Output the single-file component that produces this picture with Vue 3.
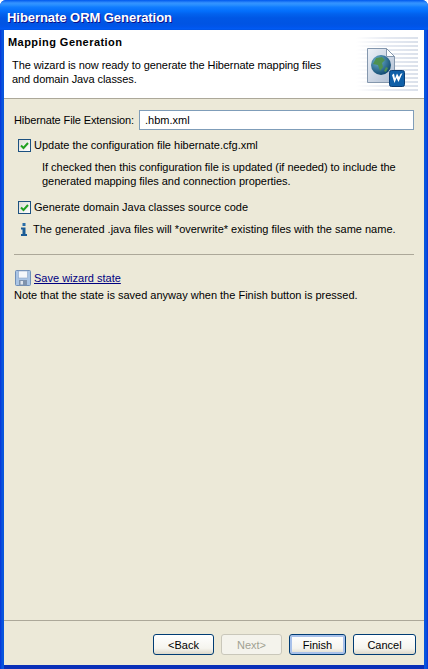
<script setup>
const buttons = [
  { label: "<Back", size: "wide" },
  { label: "Next>", size: "wide", disabled: true },
  { label: "Finish", size: "narrow", primary: true },
  { label: "Cancel", size: "wider" },
];
</script>

<template>
  <div class="window">
    <div class="titlebar">Hibernate ORM Generation</div>
    <div class="client">
      <header class="banner">
        <div class="banner-text">
          <h1>Mapping Generation</h1>
          <p>The wizard is now ready to generate the Hibernate mapping files<br />and domain Java classes.</p>
        </div>
        <div class="banner-art">
          <svg width="66" height="54" viewBox="0 0 66 54">
            <defs>
              <linearGradient id="fade" x1="0" x2="1" y1="0" y2="0">
                <stop offset="0" stop-color="#e6eaf2" stop-opacity="0" />
                <stop offset="0.5" stop-color="#e6eaf2" />
                <stop offset="1" stop-color="#dbe1eb" />
              </linearGradient>
              <linearGradient id="sheet" x1="0" x2="1" y1="0" y2="1">
                <stop offset="0" stop-color="#eef2f8" />
                <stop offset="1" stop-color="#aebdd2" />
              </linearGradient>
              <radialGradient id="globe" cx="0.35" cy="0.3" r="0.8">
                <stop offset="0" stop-color="#6fb4d0" />
                <stop offset="1" stop-color="#083f68" />
              </radialGradient>
            </defs>
            <g fill="url(#fade)">
              <rect v-for="n in 14" :key="n" x="4" :y="n * 4 - 4" width="62" height="2" />
            </g>
            <path d="M15.500 11.500h19l8 8v26h-27z" fill="url(#sheet)" stroke="#8497ad" />
            <path d="M34.500 11.500v8h8z" fill="#fff" stroke="#8497ad" />
            <circle cx="29" cy="28" r="10" fill="url(#globe)" />
            <path d="M24 21l6-1 3 3-3 3 1 4-3 4-2-6-5-1zM34 30l2 1-2 4-2-1z" fill="#4f9150" />
            <rect x="37.500" y="33.500" width="15" height="16" rx="2" fill="#0f5fa8" stroke="#0a3e76" />
            <path d="M40 38l2.500 8 2-5 2 4 4-9-2 1-1.500 3-2-3.500-2 5-1-5z" fill="#fff" />
          </svg>
        </div>
      </header>

      <main class="content">
        <div class="field-row">
          <label>Hibernate File Extension:</label>
          <div class="text-input">.hbm.xml</div>
        </div>

        <div class="check-row first">
          <span class="check">
            <svg width="9" height="9" viewBox="0 0 9 9"><path d="M1 4.500l2.500 2.500L8 2" fill="none" stroke="#21a121" stroke-width="2" /></svg>
          </span>
          <span>Update the configuration file hibernate.cfg.xml</span>
        </div>
        <p class="hint">If checked then this configuration file is updated (if needed) to include the<br />generated mapping files and connection properties.</p>

        <div class="check-row second">
          <span class="check">
            <svg width="9" height="9" viewBox="0 0 9 9"><path d="M1 4.500l2.500 2.500L8 2" fill="none" stroke="#21a121" stroke-width="2" /></svg>
          </span>
          <span>Generate domain Java classes source code</span>
        </div>
        <div class="info-row">
          <svg width="8" height="13" viewBox="0 0 8 13">
            <rect x="2.500" y="0" width="3" height="3" fill="#2a6ea8" />
            <path d="M1 4.500h4.500V11H7v2H1v-2h1.500V6.500H1z" fill="#1b5c96" />
          </svg>
          <span>The generated .java files will *overwrite* existing files with the same name.</span>
        </div>

        <hr class="rule" />

        <div class="save-row">
          <svg width="16" height="16" viewBox="0 0 16 16">
            <rect x="0.500" y="0.500" width="15" height="15" rx="1" fill="#a9c4e4" stroke="#6f8fb8" />
            <rect x="3.500" y="1" width="9" height="7" fill="#f4f7fb" stroke="#8ea6c6" stroke-width="0.600" />
            <rect x="4" y="10" width="8" height="5.500" fill="#7f93ad" />
            <rect x="5.500" y="11" width="2.500" height="3.500" fill="#dfe6ef" />
          </svg>
          <a class="link">Save wizard state</a>
        </div>
        <p class="note">Note that the state is saved anyway when the Finish button is pressed.</p>
      </main>

      <footer class="footer">
        <button
          v-for="b in buttons"
          :key="b.label"
          :class="['btn', b.size, { disabled: b.disabled, primary: b.primary }]"
        >
          {{ b.label }}
        </button>
      </footer>
    </div>
  </div>
</template>

<style scoped>
.window {
  width: 428px;
  height: 669px;
  display: flex;
  flex-direction: column;
  box-sizing: border-box;
  overflow: hidden;
  border-radius: 6px 6px 0 0;
  background: linear-gradient(90deg, #0831d9 0, #0855dd 2px, #0855dd 426px, #0831d9 100%);
  font-family: "Liberation Sans", Arial, sans-serif;
  font-size: 11px;
  line-height: 14px;
  color: #000;
}

.titlebar {
  height: 30px;
  flex: none;
  box-sizing: border-box;
  padding: 6px 0 0 7px;
  display: flex;
  align-items: center;
  color: #fff;
  font-size: 13px;
  font-weight: 700;
  letter-spacing: -0.05px;
  text-shadow: 1px 1px 0 #0f1089;
  background: linear-gradient(
    180deg,
    #0058ee 0,
    #3593ff 3px,
    #288eff 5px,
    #127dff 7px,
    #036ffc 11px,
    #0262ee 14px,
    #0057e5 18px,
    #0054e3 24px,
    #0055eb 27px,
    #005bf5 29px,
    #0050dc 30px
  );
}

.client {
  flex: 1;
  min-height: 0;
  margin: 0 4px 4px;
  display: flex;
  flex-direction: column;
  background: #ece9d8;
  box-shadow: 0 4px 0 #0a2fb8;
}

.banner {
  height: 69px;
  flex: none;
  box-sizing: border-box;
  display: flex;
  justify-content: space-between;
  background: #fff;
  border-bottom: 1px solid #aca899;
}

.banner-text {
  padding: 5px 0 0 4px;
}

.banner h1 {
  margin: 0;
  font-size: 11px;
  line-height: 14px;
  font-weight: 700;
  letter-spacing: 0.45px;
}

.banner p {
  margin: 9px 0 0 4px;
  letter-spacing: -0.08px;
}

.banner-art {
  padding: 7px 6px 0 0;
}

.banner-art svg {
  display: block;
}

.content {
  flex: 1;
  padding: 11px 10px 0;
}

.content p {
  margin: 0;
}

.field-row {
  display: flex;
  align-items: center;
  height: 20px;
}

.field-row label {
  width: 125px;
  flex: none;
  letter-spacing: -0.12px;
}

.text-input {
  flex: 1;
  height: 20px;
  box-sizing: border-box;
  border: 1px solid #7f9db9;
  background: #fff;
  padding: 2px 5px;
}

.check-row {
  display: flex;
  align-items: center;
  gap: 3px;
  height: 14px;
  padding-left: 4px;
}

.check-row.first {
  margin-top: 8px;
}

.check-row.second {
  margin-top: 12px;
}

.check {
  width: 13px;
  height: 13px;
  box-sizing: border-box;
  border: 1px solid #1c5180;
  background: linear-gradient(135deg, #dcdcd7, #fff);
  display: flex;
  align-items: center;
  justify-content: center;
}

.hint {
  padding: 8px 0 0 28px;
  letter-spacing: -0.03px;
}

.info-row {
  display: flex;
  align-items: center;
  gap: 5px;
  height: 14px;
  margin-top: 8px;
  padding-left: 6px;
}

.rule {
  margin: 18px 0 0;
  border: 0;
  border-top: 1px solid #aca899;
}

.save-row {
  display: flex;
  align-items: center;
  gap: 3px;
  margin-top: 15px;
  height: 16px;
  padding-left: 1px;
}

.link {
  color: #000080;
  text-decoration: underline;
}

.note {
  margin-top: 2px !important;
}

.footer {
  height: 45px;
  flex: none;
  box-sizing: border-box;
  border-top: 1px solid #aca899;
  display: flex;
  justify-content: flex-end;
  padding: 13px 8px 0 0;
  gap: 7px;
}

.btn {
  height: 21px;
  box-sizing: border-box;
  border: 1px solid #003c74;
  border-radius: 3px;
  background: linear-gradient(180deg, #fff 0, #f5f4ee 70%, #dcd8ca 100%);
  font: inherit;
  padding: 0;
  color: #000;
}

.btn.wide {
  width: 61px;
}

.btn.narrow {
  width: 57px;
}

.btn.wider {
  width: 63px;
}

.btn.disabled {
  border-color: #c9c7ba;
  background: #f4f3ec;
  color: #a1a192;
}

.btn.primary {
  box-shadow: inset 0 0 0 2px #a8c1ea;
}
</style>

<style>
html,
body {
  margin: 0;
  background: #fff;
}
</style>
